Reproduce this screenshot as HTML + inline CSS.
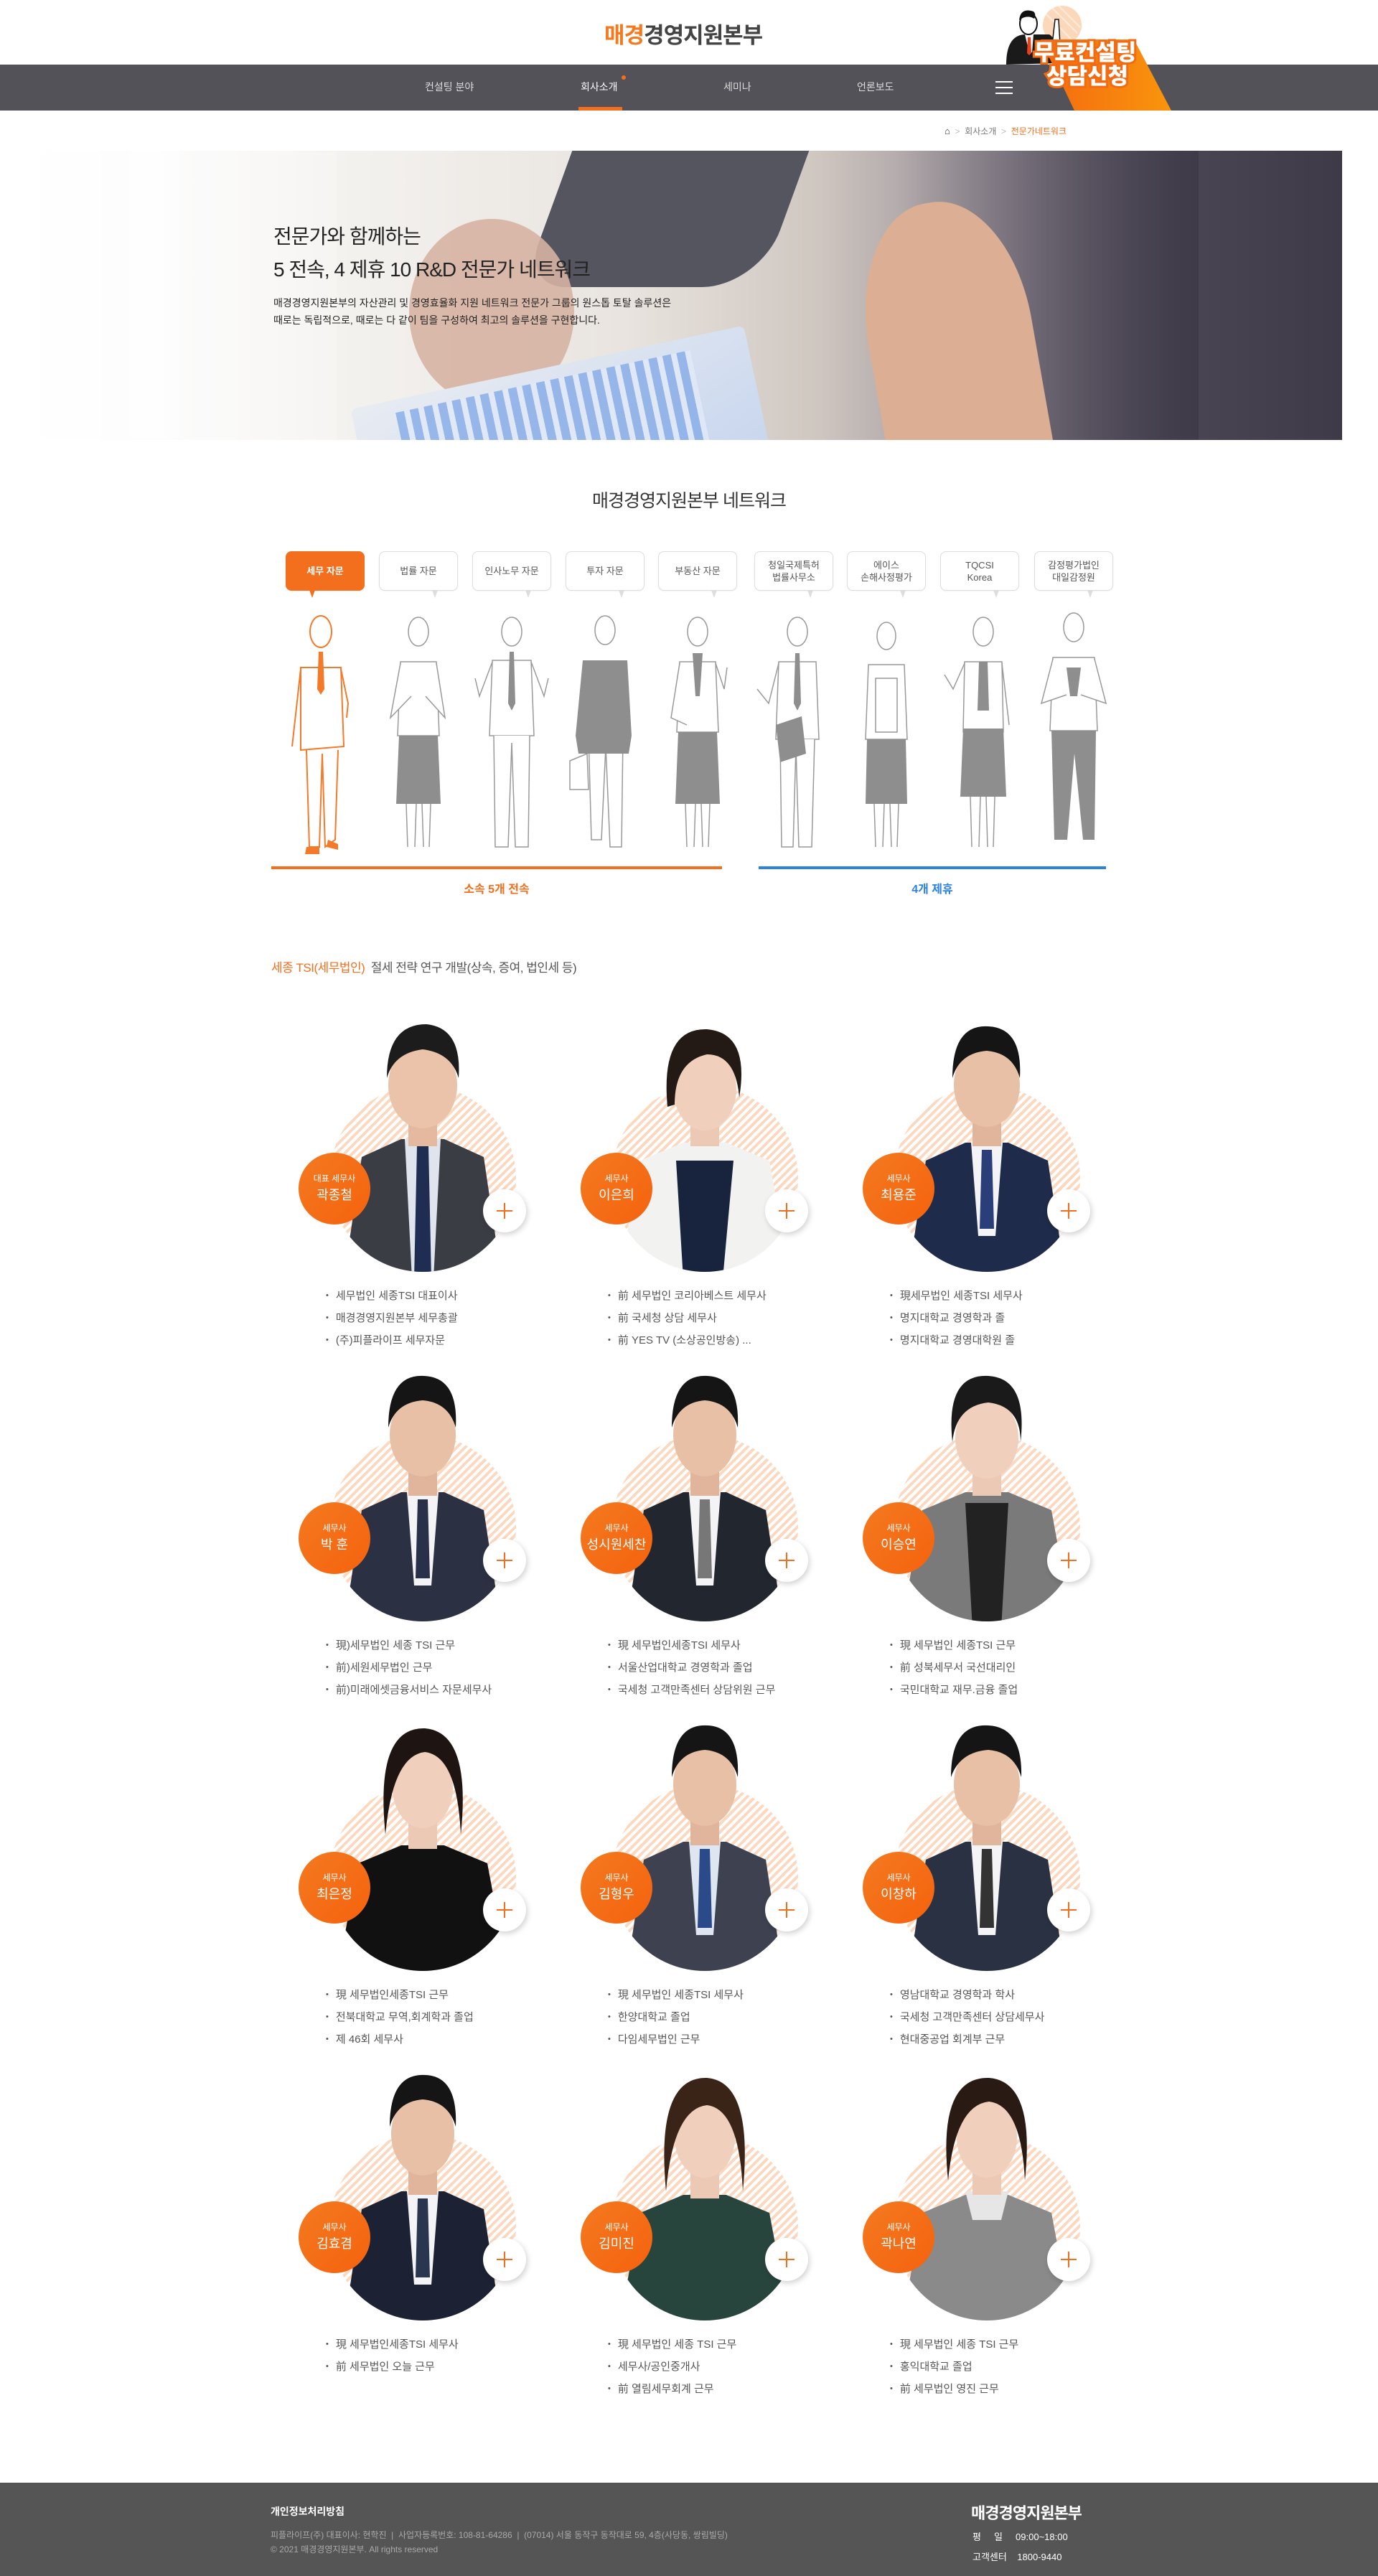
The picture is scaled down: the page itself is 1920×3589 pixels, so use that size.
<!DOCTYPE html>
<html><head><meta charset="utf-8">
<style>
*{margin:0;padding:0;box-sizing:border-box}
body{width:1920px;height:3589px;position:relative;background:#fff;font-family:"Liberation Sans","Noto Sans CJK KR",sans-serif;overflow:hidden;color:#333}
.a{position:absolute}
.nav{top:90px;left:0;width:1920px;height:64px;background:#525258}
.nav span{position:absolute;top:21px;color:#ddd;font-size:14px;white-space:nowrap}
.bub{position:absolute;top:768px;width:110px;height:55px;border:1px solid #ddd;border-radius:8px;background:#fff;font-size:13px;color:#555;text-align:center;display:flex;align-items:center;justify-content:center;line-height:17px;box-shadow:0 1px 2px rgba(0,0,0,.05)}
.bub:after{content:"";position:absolute;bottom:-11px;left:68%;border-left:4px solid transparent;border-right:4px solid transparent;border-top:11px solid #ddd}
.bub.on{background:#f36f1e;border-color:#f36f1e;color:#fff}
.bub.on:after{left:30%;border-top-color:#f36f1e}
.fig{position:absolute;top:850px;width:110px;height:352px}
.card{position:absolute;width:360px;height:520px}
.hat{position:absolute;left:50px;top:100px;width:260px;height:260px;border-radius:50%;background:repeating-linear-gradient(135deg,#fbd9c0 0 4px,#fff 4px 8px)}
.card svg{top:-20px!important}
.badge{position:absolute;left:7px;top:194px;width:100px;height:100px;border-radius:50%;background:linear-gradient(135deg,#f47a1f,#f5620e);color:#fff;text-align:center;padding-top:28px;font-size:12px;line-height:16px}
.badge b{display:block;font-weight:normal;font-size:18px;line-height:26px;margin-top:2px}
.plus{position:absolute;left:264px;top:245px;width:60px;height:60px;border-radius:50%;background:#fff;box-shadow:2px 3px 8px rgba(0,0,0,.18)}
.plus:before{content:"";position:absolute;left:19px;top:29px;width:22px;height:2px;background:#f36f1e}
.plus:after{content:"";position:absolute;left:29px;top:19px;width:2px;height:22px;background:#f36f1e}
.card ul{position:absolute;left:45px;top:379px;list-style:none;font-size:15px;color:#555;line-height:29px;white-space:nowrap}
.card li:before{content:"•";font-size:11px;margin-right:10px;position:relative;top:-2px}
</style></head><body>

<div class="a" style="left:842px;top:24px;font-size:31px;font-weight:bold;letter-spacing:-1px;color:#444">
<span style="color:#f47a1f">매경</span>경영지원본부</div>

<div class="a nav">
<span style="left:592px">컨설팅 분야</span>
<span style="left:809px;color:#fff">회사소개</span>
<span style="left:1008px">세미나</span>
<span style="left:1194px">언론보도</span>
<div class="a" style="left:866px;top:15px;width:6px;height:6px;border-radius:50%;background:#f36f1e"></div>
<div class="a" style="left:806px;top:59px;width:61px;height:5px;background:#f36f1e"></div>
<div class="a" style="left:1387px;top:23px;width:24px;height:2px;background:#fff;box-shadow:0 8px 0 #fff,0 16px 0 #fff"></div>
</div>

<svg class="a" style="left:1380px;top:0" width="260" height="154" viewBox="1380 0 260 154">
<defs><linearGradient id="og" x1="0" x2="1"><stop offset="0" stop-color="#f46a10"/><stop offset="1" stop-color="#f9950c"/></linearGradient></defs>
<circle cx="1480" cy="35" r="27" fill="#fcd8bb"/>
<path d="M1458 20 l40 40 M1465 10 l36 36 M1475 8 l30 30" stroke="#fff" stroke-width="2" opacity=".5"/>
<path d="M1402 90 q0-40 25-42 l35 0 q10 5 12 40 z" fill="#1a1a1a"/>
<path d="M1428 48 l12 0 l-2 25 l-4 0z" fill="#fff"/><path d="M1432 52 l4 0 l1 22 l-3 3 l-3-3z" fill="#e8401c"/>
<ellipse cx="1433" cy="33" rx="12" ry="15" fill="#fff" stroke="#111" stroke-width="2"/>
<path d="M1420 28 q2-18 20-12 q4 4 1 10 q-10-6-21 2z" fill="#111"/>
<path d="M1466 62 l4-35 l5 0 l2 35z" fill="#fff" stroke="#111" stroke-width="1.5"/>
<path d="M1450 55 L1580 55 L1632 154 L1497 154 Z" fill="url(#og)"/>
<g font-family="Liberation Sans,Noto Sans CJK KR,sans-serif" font-weight="900" font-size="31" text-anchor="middle" fill="#fff" stroke="#f26a12" stroke-width="6" paint-order="stroke">
<text x="1512" y="84">무료컨설팅</text><text x="1515" y="117">상담신청</text></g>
</svg>

<div class="a" style="left:1316px;top:174px;font-size:12px;color:#777;white-space:nowrap">
<span style="font-size:13px;color:#333">⌂</span>&nbsp;&nbsp;<span style="color:#bbb">&gt;</span>&nbsp;&nbsp;회사소개&nbsp;&nbsp;<span style="color:#bbb">&gt;</span>&nbsp;&nbsp;<span style="color:#f36f1e">전문가네트워크</span></div>

<!-- hero -->
<div class="a" style="left:50px;top:210px;width:1820px;height:403px;overflow:hidden;background:linear-gradient(90deg,#fafafa 0%,#f3f1ee 25%,#e9e4df 45%,#cfc6c0 60%,#8d8690 75%,#4a4552 88%,#3e3a48 100%)">
<div class="a" style="left:720px;top:-40px;width:330px;height:230px;background:#55555f;border-radius:0 0 80px 60px;transform:skewX(-20deg)"></div>
<div class="a" style="left:1200px;top:0;width:420px;height:403px;background:linear-gradient(90deg,rgba(60,55,70,0),rgba(60,55,70,.7))"></div>
<div class="a" style="left:520px;top:95px;width:230px;height:260px;border-radius:50%;background:#d6b2a2;opacity:.9"></div>
<div class="a" style="left:1160px;top:70px;width:230px;height:380px;border-radius:48% 48% 0 0;background:#dcae93;transform:rotate(-10deg)"></div>
<div class="a" style="left:450px;top:300px;width:560px;height:170px;background:linear-gradient(160deg,#e8ecf2,#c8d6ee);transform:rotate(-12deg);border-radius:8px"></div>
<div class="a" style="left:510px;top:320px;width:420px;height:130px;background:repeating-linear-gradient(90deg,#8aaee8 0 12px,#e1e9f8 12px 20px);transform:rotate(-12deg);opacity:.85"></div>
<div class="a" style="left:130px;top:0;width:70px;height:400px;background:rgba(255,255,255,.55)"></div>
<div class="a" style="left:0;top:0;width:420px;height:403px;background:linear-gradient(90deg,rgba(255,255,255,.95),rgba(255,255,255,.2))"></div>
</div>
<div class="a" style="left:381px;top:307px;font-size:28px;line-height:46px;color:#222;letter-spacing:-1px;white-space:nowrap">전문가와 함께하는<br>5 전속, 4 제휴 10 R&amp;D 전문가 네트워크</div>
<div class="a" style="left:381px;top:410px;font-size:14px;line-height:24px;color:#222;white-space:nowrap">매경경영지원본부의 자산관리 및 경영효율화 지원 네트워크 전문가 그룹의 원스톱 토탈 솔루션은<br>때로는 독립적으로, 때로는 다 같이 팀을 구성하여 최고의 솔루션을 구현합니다.</div>

<div class="a" style="left:0;top:678px;width:1920px;text-align:center;font-size:25px;color:#333;letter-spacing:-1px">매경경영지원본부 네트워크</div>
<div class="bub on" style="left:398px;font-weight:bold">세무 자문</div>
<div class="bub" style="left:528px">법률 자문</div>
<div class="bub" style="left:658px">인사노무 자문</div>
<div class="bub" style="left:788px">투자 자문</div>
<div class="bub" style="left:917px">부동산 자문</div>
<div class="bub" style="left:1051px">청일국제특허<br>법률사무소</div>
<div class="bub" style="left:1180px">에이스<br>손해사정평가</div>
<div class="bub" style="left:1310px">TQCSI<br>Korea</div>
<div class="bub" style="left:1441px">감정평가법인<br>대일감정원</div>

<svg class="fig" style="left:397px" viewBox="0 0 110 352"><g fill="#fff" stroke="#f47a2a" stroke-width="2"><ellipse cx="50" cy="30" rx="15" ry="22"/><path d="M22 80 L78 80 L82 190 L22 195Z"/><path d="M22 82 L10 190 M78 82 L88 130 L86 150"/><path d="M30 195 L34 330 L48 330 L52 200 L56 330 L70 320 L74 195"/></g><path d="M47 58 L53 58 L55 110 L50 118 L45 110Z" fill="#f47a2a"/><path d="M30 330 l18 0 l0 10 l-20 0z M60 320 l14 6 l0 8 l-16-4z" fill="#f47a2a"/></svg>
<svg class="fig" style="left:528px" viewBox="0 0 110 352"><g fill="#fff" stroke="#999" stroke-width="1.5"><ellipse cx="55" cy="30" rx="14" ry="20"/><path d="M30 72 L80 72 L84 175 L26 175Z"/><path d="M30 74 L16 150 L45 120 M80 74 L92 150 L65 120"/><path d="M38 270 L40 330 M52 270 L50 330 M60 270 L62 330 M72 270 L70 330"/></g><path d="M28 175 L82 175 L86 270 L24 270Z" fill="#8e8e8e"/></svg>
<svg class="fig" style="left:658px" viewBox="0 0 110 352"><g fill="#fff" stroke="#999" stroke-width="1.5"><ellipse cx="55" cy="30" rx="14" ry="20"/><path d="M28 70 L82 70 L86 175 L24 175Z"/><path d="M28 72 L10 120 L4 95 M82 72 L100 120 L106 95"/><path d="M30 175 L32 330 L50 330 L55 185 L60 330 L78 330 L80 175"/></g><path d="M52 58 L58 58 L60 130 L55 140 L50 130Z" fill="#8e8e8e"/></svg>
<svg class="fig" style="left:788px" viewBox="0 0 110 352"><g fill="#fff" stroke="#999" stroke-width="1.5"><ellipse cx="55" cy="28" rx="14" ry="20"/><path d="M32 175 L36 320 L50 320 L56 190 L62 330 L78 330 L80 175"/><path d="M6 210 L30 200 L32 250 L6 250Z"/></g><path d="M24 70 L86 70 L92 175 L88 200 L18 200 L14 175Z" fill="#8e8e8e"/></svg>
<svg class="fig" style="left:917px" viewBox="0 0 110 352"><g fill="#fff" stroke="#999" stroke-width="1.5"><ellipse cx="55" cy="30" rx="14" ry="20"/><path d="M30 72 L80 72 L84 170 L26 170Z"/><path d="M30 74 L18 150 L40 160 M80 74 L92 110 L96 80"/><path d="M38 270 L40 330 M52 270 L50 330 M60 270 L62 330 M72 270 L70 330"/></g><path d="M48 60 L62 60 L58 120 L52 120Z" fill="#8e8e8e"/><path d="M28 170 L82 170 L86 270 L24 270Z" fill="#8e8e8e"/></svg>
<svg class="fig" style="left:1051px" viewBox="0 0 110 352"><g fill="#fff" stroke="#999" stroke-width="1.5"><ellipse cx="60" cy="30" rx="14" ry="20"/><path d="M34 72 L86 72 L90 180 L30 180Z"/><path d="M34 74 L20 130 L4 110"/><path d="M36 180 L38 330 L54 330 L58 190 L62 330 L80 330 L84 180"/></g><path d="M57 60 L63 60 L65 130 L60 140 L55 130Z" fill="#8e8e8e"/><path d="M30 160 L66 148 L72 200 L36 212Z" fill="#8e8e8e"/></svg>
<svg class="fig" style="left:1180px" viewBox="0 0 110 352"><g fill="#fff" stroke="#999" stroke-width="1.5"><ellipse cx="55" cy="36" rx="13" ry="19"/><path d="M30 76 L80 76 L84 180 L26 180Z"/><path d="M40 95 L70 95 L70 170 L40 170Z"/><path d="M38 270 L40 330 M52 270 L50 330 M60 270 L62 330 M72 270 L70 330"/></g><path d="M28 180 L82 180 L84 270 L26 270Z" fill="#8e8e8e"/></svg>
<svg class="fig" style="left:1310px" viewBox="0 0 110 352"><g fill="#fff" stroke="#999" stroke-width="1.5"><ellipse cx="60" cy="30" rx="14" ry="20"/><path d="M34 72 L86 72 L88 170 L32 170Z"/><path d="M34 74 L18 110 L6 90 M86 74 L96 160"/><path d="M42 260 L44 330 M56 260 L54 330 M64 260 L66 330 M76 260 L74 330"/></g><path d="M54 72 L66 72 L68 140 L52 140Z" fill="#8e8e8e"/><path d="M32 165 L88 165 L92 260 L28 260Z" fill="#8e8e8e"/></svg>
<svg class="fig" style="left:1441px" viewBox="0 0 110 352"><g fill="#fff" stroke="#999" stroke-width="1.5"><ellipse cx="55" cy="24" rx="14" ry="20"/><path d="M26 66 L84 66 L88 168 L22 168Z"/><path d="M26 68 L10 130 L45 118 M84 68 L100 130 L65 118"/></g><path d="M24 168 L86 168 L84 320 L68 320 L56 200 L46 320 L28 320Z" fill="#8e8e8e"/><path d="M45 80 L65 80 L60 120 L50 120Z" fill="#8e8e8e"/></svg>

<div class="a" style="left:378px;top:1207px;width:628px;height:4px;background:#f36f1e"></div>
<div class="a" style="left:1057px;top:1207px;width:484px;height:4px;background:#2d82e0"></div>
<div class="a" style="left:378px;top:1225px;width:628px;text-align:center;font-size:16px;color:#f36f1e;font-weight:bold">소속 5개 전속</div>
<div class="a" style="left:1057px;top:1225px;width:484px;text-align:center;font-size:16px;color:#2d82e0;font-weight:bold">4개 제휴</div>

<div class="a" style="left:378px;top:1334px;font-size:17px;color:#555;white-space:nowrap;letter-spacing:-.5px"><span style="color:#f36f1e">세종 TSI(세무법인)</span>&nbsp;&nbsp;절세 전략 연구 개발(상속, 증여, 법인세 등)</div>

<svg width="0" height="0" style="position:absolute"><defs>
<clipPath id="cp"><circle cx="180" cy="250" r="130"/><rect x="50" y="0" width="260" height="250"/></clipPath>
</defs></svg>

<div class="card" style="left:409px;top:1412px"><div class="hat"></div>
<svg class="a" style="left:0;top:0" width="360" height="380"><g clip-path="url(#cp)"><path d="M70 390 L95 220 L150 195 L210 195 L265 220 L290 390Z" fill="#3a3d44"/><path d="M155 195 L205 195 L195 390 L165 390Z" fill="#dfe4ee"/><path d="M172 205 L188 205 L192 390 L168 390Z" fill="#1f2d52"/><rect x="160" y="150" width="40" height="55" fill="#e4b99f"/><ellipse cx="180" cy="120" rx="48" ry="60" fill="#eac3aa"/><path d="M130 110 q0-75 55-75 q50 5 45 75 q-10-35-50-40 q-40 5-50 40z" fill="#1c1c1c"/></g></svg>
<div class="badge">대표 세무사<b>곽종철</b></div><div class="plus"></div>
<ul><li>세무법인 세종TSI 대표이사</li><li>매경경영지원본부 세무총괄</li><li>(주)피플라이프 세무자문</li></ul></div>

<div class="card" style="left:802px;top:1412px"><div class="hat"></div>
<svg class="a" style="left:0;top:0" width="360" height="380"><g clip-path="url(#cp)"><path d="M60 390 L90 225 L150 200 L210 200 L270 225 L300 390Z" fill="#f2f2f0"/><path d="M140 225 L220 225 L205 390 L150 390Z" fill="#18233d"/><rect x="160" y="160" width="40" height="45" fill="#ecc9b4"/><ellipse cx="180" cy="125" rx="44" ry="58" fill="#f0d0bd"/><path d="M128 150 q-10-110 55-108 q60 5 45 95 q-5-60-45-60 q-45 10-45 70z" fill="#231a16"/></g></svg>
<div class="badge">세무사<b>이은희</b></div><div class="plus"></div>
<ul><li>前 세무법인 코리아베스트 세무사</li><li>前 국세청 상담 세무사</li><li>前 YES TV (소상공인방송) ...</li></ul></div>

<div class="card" style="left:1195px;top:1412px"><div class="hat"></div>
<svg class="a" style="left:0;top:0" width="360" height="380"><g clip-path="url(#cp)"><path d="M70 390 L95 225 L150 200 L210 200 L265 225 L290 390Z" fill="#1f2b4a"/><path d="M158 200 L202 200 L192 330 L168 330Z" fill="#f4f4f6"/><path d="M173 210 L187 210 L190 320 L170 320Z" fill="#2a3f7a"/><rect x="160" y="150" width="40" height="55" fill="#e0b59b"/><ellipse cx="180" cy="120" rx="46" ry="58" fill="#e8c0a6"/><path d="M132 110 q0-75 50-72 q48 2 44 72 q-10-35-46-38 q-38 3-48 38z" fill="#151515"/></g></svg>
<div class="badge">세무사<b>최용준</b></div><div class="plus"></div>
<ul><li>現세무법인 세종TSI 세무사</li><li>명지대학교 경영학과 졸</li><li>명지대학교 경영대학원 졸</li></ul></div>

<div class="card" style="left:409px;top:1899px"><div class="hat"></div>
<svg class="a" style="left:0;top:0" width="360" height="380"><g clip-path="url(#cp)"><path d="M70 390 L95 225 L150 200 L210 200 L265 225 L290 390Z" fill="#2b3142"/><path d="M158 200 L202 200 L192 330 L168 330Z" fill="#f4f4f6"/><path d="M173 210 L187 210 L190 320 L170 320Z" fill="#29304a"/><rect x="160" y="150" width="40" height="55" fill="#e0b59b"/><ellipse cx="180" cy="120" rx="46" ry="58" fill="#e8c0a6"/><path d="M132 110 q0-75 50-72 q48 2 44 72 q-10-35-46-38 q-38 3-48 38z" fill="#151515"/></g></svg>
<div class="badge">세무사<b>박 훈</b></div><div class="plus"></div>
<ul><li>現)세무법인 세종 TSI 근무</li><li>前)세원세무법인 근무</li><li>前)미래에셋금융서비스 자문세무사</li></ul></div>

<div class="card" style="left:802px;top:1899px"><div class="hat"></div>
<svg class="a" style="left:0;top:0" width="360" height="380"><g clip-path="url(#cp)"><path d="M70 390 L95 225 L150 200 L210 200 L265 225 L290 390Z" fill="#22262f"/><path d="M158 200 L202 200 L192 330 L168 330Z" fill="#f4f4f6"/><path d="M173 210 L187 210 L190 320 L170 320Z" fill="#777"/><rect x="160" y="150" width="40" height="55" fill="#e0b59b"/><ellipse cx="180" cy="120" rx="44" ry="58" fill="#e8c0a6"/><path d="M134 110 q0-75 50-72 q45 2 42 72 q-10-35-46-38 q-36 3-46 38z" fill="#151515"/></g></svg>
<div class="badge">세무사<b>성시원세찬</b></div><div class="plus"></div>
<ul><li>現 세무법인세종TSI 세무사</li><li>서울산업대학교 경영학과 졸업</li><li>국세청 고객만족센터 상담위원 근무</li></ul></div>

<div class="card" style="left:1195px;top:1899px"><div class="hat"></div>
<svg class="a" style="left:0;top:0" width="360" height="380"><g clip-path="url(#cp)"><path d="M60 390 L90 225 L150 200 L210 200 L270 225 L300 390Z" fill="#7a7a7a"/><path d="M150 215 L210 215 L200 390 L160 390Z" fill="#222"/><rect x="160" y="160" width="40" height="45" fill="#ecc9b4"/><ellipse cx="180" cy="125" rx="44" ry="56" fill="#f0d0bd"/><path d="M132 130 q-10-95 50-92 q55 3 45 92 q0-50-45-55 q-45 5-50 55z" fill="#1a1a1a"/></g></svg>
<div class="badge">세무사<b>이승연</b></div><div class="plus"></div>
<ul><li>現 세무법인 세종TSI 근무</li><li>前 성북세무서 국선대리인</li><li>국민대학교 재무.금융 졸업</li></ul></div>

<div class="card" style="left:409px;top:2386px"><div class="hat"></div>
<svg class="a" style="left:0;top:0" width="360" height="380"><g clip-path="url(#cp)"><path d="M60 390 L90 230 L150 205 L210 205 L270 230 L300 390Z" fill="#111"/><rect x="160" y="160" width="40" height="50" fill="#ecc9b4"/><ellipse cx="180" cy="125" rx="42" ry="56" fill="#f0d0bd"/><path d="M128 190 q-15-150 55-148 q65 5 50 148 q-5-110-50-115 q-45 5-55 115z" fill="#1e1512"/></g></svg>
<div class="badge">세무사<b>최은정</b></div><div class="plus"></div>
<ul><li>現 세무법인세종TSI 근무</li><li>전북대학교 무역,회계학과 졸업</li><li>제 46회 세무사</li></ul></div>

<div class="card" style="left:802px;top:2386px"><div class="hat"></div>
<svg class="a" style="left:0;top:0" width="360" height="380"><g clip-path="url(#cp)"><path d="M70 390 L95 225 L150 200 L210 200 L265 225 L290 390Z" fill="#3d4150"/><path d="M158 200 L202 200 L192 330 L168 330Z" fill="#dfe6f2"/><path d="M173 210 L187 210 L190 320 L170 320Z" fill="#2a4a8a"/><rect x="160" y="150" width="40" height="55" fill="#e0b59b"/><ellipse cx="180" cy="120" rx="44" ry="58" fill="#e8c0a6"/><path d="M134 110 q0-75 50-72 q45 2 42 72 q-10-35-46-38 q-36 3-46 38z" fill="#151515"/></g></svg>
<div class="badge">세무사<b>김형우</b></div><div class="plus"></div>
<ul><li>現 세무법인 세종TSI 세무사</li><li>한양대학교 졸업</li><li>다임세무법인 근무</li></ul></div>

<div class="card" style="left:1195px;top:2386px"><div class="hat"></div>
<svg class="a" style="left:0;top:0" width="360" height="380"><g clip-path="url(#cp)"><path d="M70 390 L95 225 L150 200 L210 200 L265 225 L290 390Z" fill="#2a3142"/><path d="M158 200 L202 200 L192 330 L168 330Z" fill="#f4f4f6"/><path d="M173 210 L187 210 L190 320 L170 320Z" fill="#333"/><rect x="160" y="150" width="40" height="55" fill="#e0b59b"/><ellipse cx="180" cy="120" rx="46" ry="58" fill="#e8c0a6"/><path d="M130 110 q0-75 52-72 q48 2 46 72 q-10-35-46-38 q-40 3-52 38z" fill="#151515"/></g></svg>
<div class="badge">세무사<b>이창하</b></div><div class="plus"></div>
<ul><li>영남대학교 경영학과 학사</li><li>국세청 고객만족센터 상담세무사</li><li>현대중공업 회계부 근무</li></ul></div>

<div class="card" style="left:409px;top:2873px"><div class="hat"></div>
<svg class="a" style="left:0;top:0" width="360" height="380"><g clip-path="url(#cp)"><path d="M70 390 L95 225 L150 200 L210 200 L265 225 L290 390Z" fill="#1c2233"/><path d="M158 200 L202 200 L192 330 L168 330Z" fill="#f4f4f6"/><path d="M173 210 L187 210 L190 320 L170 320Z" fill="#2a3550"/><rect x="160" y="150" width="40" height="55" fill="#e0b59b"/><ellipse cx="180" cy="120" rx="44" ry="58" fill="#e8c0a6"/><path d="M134 110 q0-75 50-72 q45 2 42 72 q-10-35-46-38 q-36 3-46 38z" fill="#151515"/></g></svg>
<div class="badge">세무사<b>김효겸</b></div><div class="plus"></div>
<ul><li>現 세무법인세종TSI 세무사</li><li>前 세무법인 오늘 근무</li></ul></div>

<div class="card" style="left:802px;top:2873px"><div class="hat"></div>
<svg class="a" style="left:0;top:0" width="360" height="380"><g clip-path="url(#cp)"><path d="M60 390 L90 230 L150 205 L210 205 L270 230 L300 390Z" fill="#27453d"/><rect x="160" y="160" width="40" height="50" fill="#ecc9b4"/><ellipse cx="180" cy="125" rx="42" ry="56" fill="#f0d0bd"/><path d="M126 200 q-15-160 57-158 q65 5 50 158 q-5-115-50-120 q-47 5-57 120z" fill="#3a2418"/></g></svg>
<div class="badge">세무사<b>김미진</b></div><div class="plus"></div>
<ul><li>現 세무법인 세종 TSI 근무</li><li>세무사/공인중개사</li><li>前 열림세무회계 근무</li></ul></div>

<div class="card" style="left:1195px;top:2873px"><div class="hat"></div>
<svg class="a" style="left:0;top:0" width="360" height="380"><g clip-path="url(#cp)"><path d="M60 390 L90 230 L150 205 L210 205 L270 230 L300 390Z" fill="#8a8a8a"/><path d="M150 200 L210 200 L200 240 L160 240Z" fill="#e6e6e6"/><rect x="160" y="160" width="40" height="45" fill="#ecc9b4"/><ellipse cx="180" cy="125" rx="42" ry="56" fill="#f0d0bd"/><path d="M126 185 q-15-145 57-143 q65 5 50 143 q-5-105-50-110 q-47 5-57 110z" fill="#2a1a14"/></g></svg>
<div class="badge">세무사<b>곽나연</b></div><div class="plus"></div>
<ul><li>現 세무법인 세종 TSI 근무</li><li>홍익대학교 졸업</li><li>前 세무법인 영진 근무</li></ul></div>

<div class="a" style="left:0;top:3459px;width:1920px;height:130px;background:#555"></div>
<div class="a" style="left:377px;top:3489px;font-size:14px;font-weight:bold;color:#fff">개인정보처리방침</div>
<div class="a" style="left:377px;top:3522px;font-size:12px;line-height:20px;color:#aaa;white-space:nowrap">피플라이프(주) 대표이사: 현학진 &nbsp;|&nbsp; 사업자등록번호: 108-81-64286 &nbsp;|&nbsp; (07014) 서울 동작구 동작대로 59, 4층(사당동, 쌍림빌딩)<br>© 2021 매경경영지원본부. All rights reserved</div>
<div class="a" style="left:1353px;top:3484px;font-size:22px;font-weight:bold;color:#fff;letter-spacing:-1px">매경경영지원본부</div>
<div class="a" style="left:1355px;top:3521px;font-size:13px;line-height:28px;color:#fff;white-space:nowrap">평&nbsp;&nbsp;&nbsp;&nbsp;&nbsp;일&nbsp;&nbsp;&nbsp;&nbsp;&nbsp;09:00~18:00<br>고객센터&nbsp;&nbsp;&nbsp;&nbsp;1800-9440</div>
</body></html>
